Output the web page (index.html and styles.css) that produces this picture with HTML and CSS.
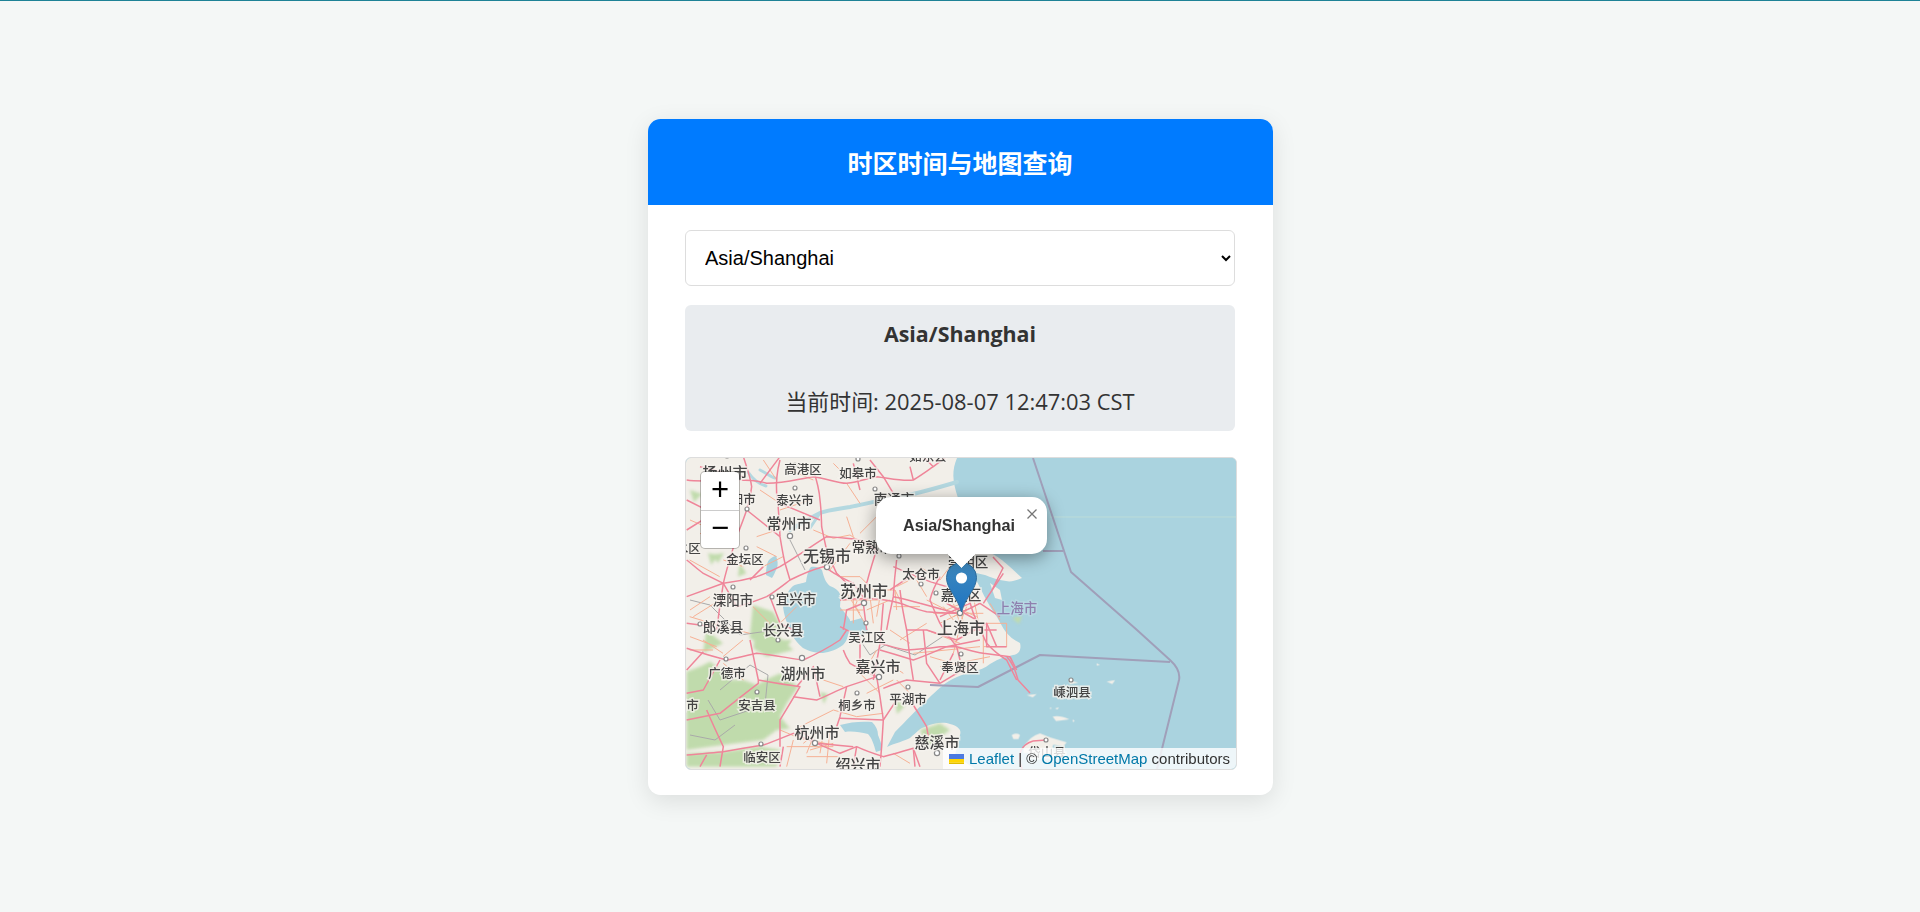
FILE: index.html
```html
<!DOCTYPE html>
<html lang="zh-CN">
<head>
<meta charset="utf-8">
<title>时区时间与地图查询</title>
<link rel="stylesheet" href="styles.css">
</head>
<body>
<main class="card">
  <header class="card-head"><h1>时区时间与地图查询</h1></header>
  <section class="card-body">
    <select class="zone-select"><option>Asia/Shanghai</option></select>
    <div class="info">
      <h2>Asia/Shanghai</h2>
      <p>当前时间: 2025-08-07 12:47:03 CST</p>
    </div>
    <div class="map">
      <svg class="tiles" viewBox="686 458 550 311" aria-hidden="false">
        <rect class="sea" x="686" y="458" width="550" height="311"/>
        <g class="soft">
          <path class="land" d="M686 458H957C952 470 952 480 958 498C958 515 948 530 952 545C958 560 968 570 975 578C982 590 985 600 997 617C1003 628 1007 637 1020 643C1022 650 1018 655 1013 655C1005 657 1000 658 990 664C980 672 968 672 957 677C945 682 937 690 927 700C918 708 905 722 895 732L887 747C895 743 905 741 910 738C917 732 920 728 925 727C935 722 945 722 950 724C958 726 962 730 960 735L955 755L975 769H686Z"/>
          <path class="land" d="M960 560C970 556 978 552 985 552C995 553 1003 560 1022 578C1015 581 1010 582 1006 581C998 580 990 577 985 575C975 573 970 571 965 570Z"/>
          <path class="land" d="M990 583L1000 590L1002 600L995 598Z"/>
          <g transform="translate(930 630) scale(.3333)">
            <path class="land" d="M245 315q15-8 25 0l-5 12h-15z"/>
            <path class="land" d="M280 355q15-35 50-45l30 12 50 15-10 12-30-5-10 25h-80z"/>
            <path class="land" d="M290 195l30-3-12 10zM368 260q20-5 50 8l-40 5zM415 150l30 8-25 5zM530 155l25-5-8 12zM500 100l10 5-10 2zM360 232l6 3-6 2zM375 235l12-3-5 7zM428 268l6 5-6 3z"/>
          </g>
          <path class="lake" d="M783 607C785 598 788 590 793 586C798 583 802 584 806 582C807 576 808 570 811 567C816 566 820 568 822 570C824 578 826 583 830 586C835 588 838 590 840 594C841 600 840 604 840 607C844 612 848 616 850 620C851 626 850 632 848 635C847 640 845 643 843 645C836 650 830 652 823 653C816 653 808 651 803 648C796 642 792 636 790 630C786 622 784 614 783 607Z"/>
          <path class="lake" d="M766 575C766 568 767 562 769 560C771 558 774 556 776 556C778 560 778 565 777 568C775 572 774 575 772 578Z"/>
          <path class="lake" d="M847 622L862 618L868 630L858 640L850 636Z"/>
          <path class="lake" d="M840 725C850 722 862 721 872 722C876 726 878 730 878 735C880 740 882 745 882 750L876 752C874 745 872 738 868 734C860 732 852 731 845 732Z"/>
          <path class="river" d="M957 482C930 490 915 494 900 497C880 500 865 504 850 507C838 509 828 510 820 513C810 518 800 524 790 530"/>
          <path class="river thin" d="M748 472C752 478 758 484 766 486M760 470C768 474 772 478 775 478M820 513L810 528"/>
        </g>
        <g class="leaf">
          <g transform="translate(680 630) scale(.3333)">
            <path class="forest" d="M20 125L60 110L90 95L130 125L150 150L190 150L230 165L265 145L300 130L355 170L320 220L300 260L330 295L290 300L250 330L130 345L20 360Z"/>
            <path class="forest" d="M20 370L130 365L240 350L300 360L290 410H20Z"/>
            <path class="forest" d="M225 5L290 15L340 60L260 80L220 55Z"/>
            <path class="forest" d="M720 300l60-20 30 20-70 50z"/>
          </g>
          <g transform="translate(683 540) scale(.3333)">
            <path class="forest" d="M210 195l60 20 30 50-40 60-60-30z M70 270l50 40-60 30zM75 40l30 5-20 30zM170 70l20 30-25 10z"/>
          </g>
          <path class="forest" d="M712 555l12-2-6 10zM1012 618l10-2-3 8zM690 490l12 4-8 8zM780 640l12 0-6 8zM820 692l8 2-4 10zM895 700l10 6-8 8z"/>
        </g>
        <g class="soft">
          <path class="sea-line" d="M1050 517H1236"/>
          <path class="border" d="M1033 458L1071 572L1137 630L1170 660Q1181 670 1179 680L1157 769"/>
          <path class="border" d="M930 685L978 687L1040 655L1170 662M1043 551H1063"/>
          <path class="border thin" d="M690 600l20 5 30 30 35 -5M720 690l30-25 18 10-3 30 -45 15 -12-20M690 735l25 5 20-15M790 540l15 30M945 635l-30 20-30-10-15 10-10-15"/>
        </g>
        <g class="soft">
          <g class="minor" transform="translate(680 450) scale(.3333)">
            <path d="M400 240l60 25 50-10 30 20M500 200l20 60M590 200l-50 50M450 360l60-80M480 380h60l60 60M600 440l-10 60M640 470h80M720 350l60 40 30-40M130 330l60 20M60 250l60 30M230 260l60-20M240 120l60 40M500 100l40 60M620 230l-30 60M290 320l-60-30M300 180l90-30M30 210l70 30 60-20M330 60l70 30M460 40l50 50M250 30l40 60M100 120l80 30M120 450l-80 50M350 470l-60 60M560 480l70-30M710 380l-60 30M30 480l60-40"/>
          </g>
          <g class="minor" transform="translate(683 540) scale(.3333)">
            <path d="M20 60l90 50M20 230l100 30M120 260l80 20M180 300l-60 50M60 300l60 40M20 330h70M210 200l50 50M240 80l60-30"/>
          </g>
          <g class="minor" transform="translate(840 560) scale(.3333)">
            <path d="M0 120H120M40 90V190M0 150h70M60 100l-15 40 30 50M120 90h45l20 40M165 90l5 60M260 120l60 30 90-40M280 160h150M300 190l120-60M340 130l30 90M400 110l20 100M430 190h70v70h-70zM360 200l-20 80M260 210l100 40M220 280l200-20M430 260v50M150 210l60 40M180 240l80-50M310 140l30 40M320 130l90 40M340 170l60-30M360 140l10 50M380 140l-20 50M20 100l40 60M90 110l10 80M230 60l30 50M450 130l30 50M270 290l100 30M300 320l150-30"/>
          </g>
          <g class="minor" transform="translate(680 630) scale(.3333)">
            <path d="M300 300l60 25 100 20M460 240l70 20 80-10M360 290l100-50M320 350h140M340 330l-20 80M450 300l-10 100M540 130l60 60M560 190l80-40M610 90l60 40M430 150l60 20M30 20l80 30M650 150l60 60M380 380h100M370 340l50-40M390 360l70-20M400 320l-20 50M430 310l-10 60M640 370l50 30M130 100l60 50M590 60l-40 70"/>
          </g>
          <g class="road" transform="translate(680 450) scale(.3333)">
            <path d="M20 90C80 100 200 80 260 100C320 100 360 85 400 80C440 85 470 100 500 100C540 95 560 85 590 80C630 85 670 95 700 90C725 75 745 60 760 50L800 20"/>
            <path d="M400 60C410 90 418 120 420 150C424 180 424 205 425 230C430 255 435 280 440 300C450 325 460 350 470 370L500 400"/>
            <path d="M300 30C292 60 288 100 290 130C296 170 298 220 300 260C305 290 310 320 315 340L330 390"/>
            <path d="M190 20C200 50 212 85 215 110C212 135 205 160 200 180C190 210 180 235 170 260C155 310 140 355 130 400C122 450 115 500 110 540"/>
            <path d="M20 150C50 165 80 180 100 190C125 210 150 240 170 260"/>
            <path d="M20 330C40 345 55 360 70 370L130 400C165 395 200 388 230 380C255 372 280 360 300 350C350 320 400 285 440 260C480 262 515 265 540 270L590 300"/>
            <path d="M20 440L130 400"/>
            <path d="M130 400C145 425 158 450 170 470C205 462 235 450 260 440C285 425 310 405 330 390C365 372 400 358 430 350C445 358 465 372 480 380C495 388 510 395 520 400L560 455"/>
            <path d="M610 80L640 130M700 90L690 50M610 80L570 30M760 50L730 20M540 120L520 40"/>
            <path d="M650 330C645 370 642 405 640 440C632 475 625 510 620 540"/>
            <path d="M590 300C578 335 568 370 560 400C556 425 552 445 550 460L560 540"/>
            <path d="M550 460L500 480L490 540"/>
            <path d="M640 350C680 368 715 382 750 395L800 410"/>
            <path d="M240 100L300 20M60 50L190 80M300 260L200 180M300 160L420 210M20 240L100 190M100 190L130 90"/>
            <path d="M640 440C665 445 695 452 720 460L830 490"/>
            <path d="M270 440L300 520L340 540"/>
            <path d="M20 520L100 530M210 390L250 350"/>
          </g>
          <g class="road" transform="translate(840 560) scale(.3333)">
            <path d="M0 120C60 115 110 110 180 130C210 140 235 150 260 155C290 158 320 160 350 160C375 155 400 140 420 130L480 170"/>
            <path d="M180 90L185 130C190 160 195 185 200 210C205 260 212 310 220 360"/>
            <path d="M130 130C126 170 124 210 120 250C114 285 106 325 100 360"/>
            <path d="M350 0C360 30 370 60 380 90C386 115 392 135 400 160C412 190 425 220 440 250C460 272 480 288 500 300L530 360"/>
            <path d="M300 50C285 75 275 100 270 120C280 145 290 170 300 190C315 215 335 240 350 260L360 300"/>
            <path d="M430 130L490 40"/>
            <path d="M200 210L260 210L350 240L440 190L470 260"/>
            <path d="M120 250C150 258 175 266 200 270C235 268 270 264 300 260L350 260C380 268 405 276 430 280L510 290"/>
            <path d="M340 280L300 360M510 290L530 330"/>
            <path d="M0 200L60 230L60 340"/>
            <path d="M440 190V260H500M390 210H470M150 90L210 50M320 130L410 180M300 170L390 130"/>
          </g>
          <g class="road" transform="translate(680 630) scale(.3333)">
            <path d="M20 55C60 68 100 80 140 90C170 85 200 76 230 70C280 75 330 85 370 90C410 72 450 50 480 30L500 0"/>
            <path d="M210 30C218 70 228 115 235 150C235 155 235 158 235 160C195 190 155 222 120 250L20 270"/>
            <path d="M235 150C280 158 320 165 360 170C340 205 318 240 300 270L300 350"/>
            <path d="M80 240C95 275 112 312 130 350L120 410"/>
            <path d="M20 375C60 372 95 368 130 365C170 358 210 352 250 345C280 335 310 322 340 310C365 320 390 330 410 340L520 350"/>
            <path d="M490 60C495 75 502 88 510 100C535 115 565 128 590 140C597 180 604 225 610 270L605 350L600 410"/>
            <path d="M590 140C560 150 530 160 500 170C470 182 440 198 410 210L340 200"/>
            <path d="M500 170L480 260L470 290"/>
            <path d="M730 0C734 35 737 68 740 100L780 160"/>
            <path d="M600 60C635 70 668 80 700 90C735 78 770 62 800 50L900 30"/>
            <path d="M780 160L880 100"/>
            <path d="M610 175C635 165 660 155 680 150L780 160"/>
            <path d="M480 265L610 270L650 210"/>
            <path d="M700 225C715 250 730 272 740 290L745 320"/>
            <path d="M410 340L480 370L530 350L520 410M530 350C555 362 585 372 610 380C640 372 672 364 700 355L720 410"/>
            <path d="M350 170L400 110L420 200"/>
            <path d="M20 120L70 65M120 90L70 180L20 190M300 410L310 350M700 355L705 410M360 300L410 340M60 410L80 375"/>
          </g>
          <path class="road" d="M1007 657C1012 662 1016 672 1018 680L1030 693"/>
          <path class="road" d="M1033 741C1020 745 1017 755 1022 769M1033 741L1046 740"/>
          <path class="road" d="M993 557L1003 568L992 590"/>
        </g>
        <g class="places">
          <circle cx="727" cy="456" r="2"/><circle cx="858" cy="459" r="2"/><circle cx="795" cy="465" r="2"/><circle cx="795" cy="488" r="2"/><circle cx="747" cy="509" r="2"/><circle cx="790" cy="536" r="2.6"/><circle cx="746" cy="548" r="2"/><circle cx="827" cy="567" r="2.6"/><circle cx="733" cy="587" r="2"/><circle cx="772" cy="597" r="2"/><circle cx="864" cy="603" r="2.6"/><circle cx="866" cy="623" r="2"/><circle cx="899" cy="556" r="2"/><circle cx="921" cy="584" r="2"/><circle cx="936" cy="593" r="2"/><circle cx="960" cy="613" r="2.6"/><circle cx="961" cy="654" r="2"/><circle cx="778" cy="640" r="2"/><circle cx="700" cy="624" r="2"/><circle cx="726" cy="659" r="2"/><circle cx="802" cy="658" r="2.6"/><circle cx="757" cy="692" r="2"/><circle cx="857" cy="693" r="2"/><circle cx="879" cy="677" r="2.6"/><circle cx="908" cy="687" r="2"/><circle cx="815" cy="743" r="2.6"/><circle cx="761" cy="744" r="2"/><circle cx="937" cy="753" r="2.6"/><circle cx="1071" cy="680" r="2"/><circle cx="1046" cy="740" r="2"/><circle cx="965" cy="519" r="2"/><circle cx="875" cy="489" r="2"/>
        </g>
        <g class="labels">
          <text class="s14" x="725" y="471">扬州市</text>
          <text class="s12" x="803" y="468">高港区</text>
          <text class="s12" x="858" y="472">如皋市</text>
          <text class="s12" x="928" y="455">如东县</text>
          <text class="s13" x="894" y="498">南通市</text>
          <text class="s12" x="737" y="498">丹阳市</text>
          <text class="s12" x="795" y="499">泰兴市</text>
          <text class="s14" x="789" y="522">常州市</text>
          <text class="s13" x="872" y="546">常熟市</text>
          <text class="s15" x="827" y="555">无锡市</text>
          <text class="s12" x="921" y="573">太仓市</text>
          <text class="s12" x="745" y="558">金坛区</text>
          <text class="s12" x="682" y="547">溧水区</text>
          <text class="s15" x="864" y="590">苏州市</text>
          <text class="s13" x="733" y="599">溧阳市</text>
          <text class="s13" x="796" y="598">宜兴市</text>
          <text class="s13" x="961" y="594">嘉定区</text>
          <text class="s15" x="961" y="627">上海市</text>
          <text class="s13 purple" x="1017" y="607">上海市</text>
          <text class="s13" x="968" y="561">崇明区</text>
          <text class="s13" x="723" y="626">郎溪县</text>
          <text class="s13" x="783" y="629">长兴县</text>
          <text class="s12" x="867" y="636">吴江区</text>
          <text class="s14" x="878" y="665">嘉兴市</text>
          <text class="s12" x="960" y="666">奉贤区</text>
          <text class="s12" x="727" y="672">广德市</text>
          <text class="s14" x="803" y="672">湖州市</text>
          <text class="s12" x="757" y="704">安吉县</text>
          <text class="s12" x="680" y="704">宁国市</text>
          <text class="s12" x="857" y="704">桐乡市</text>
          <text class="s12" x="908" y="698">平湖市</text>
          <text class="s14" x="817" y="731">杭州市</text>
          <text class="s14" x="937" y="741">慈溪市</text>
          <text class="s12" x="762" y="756">临安区</text>
          <text class="s14" x="858" y="763">绍兴市</text>
          <text class="s12" x="1072" y="691">嵊泗县</text>
          <text class="s12" x="1047" y="751">岱山县</text>
        </g>
      </svg>
      <svg class="marker" viewBox="0 0 33 52" aria-hidden="true">
        <defs>
          <linearGradient id="pin" x1="0" y1="0" x2="0" y2="1">
            <stop offset="0" stop-color="#3e88bd"/>
            <stop offset="1" stop-color="#1f75c2"/>
          </linearGradient>
        </defs>
        <path fill="url(#pin)" stroke="#2f6d9c" d="M16.5 51C12 35 1.5 28 1.5 16.5A15 15 0 0 1 31.5 16.5C31.5 28 21 35 16.5 51Z"/>
        <circle cx="16.5" cy="17" r="5.6" fill="#fff"/>
      </svg>
      <div class="popup">
        <strong>Asia/Shanghai</strong>
        <svg class="popup-close" viewBox="0 0 10 10" aria-hidden="true"><path d="M.5 .5L9.5 9.5M9.5 .5L.5 9.5"/></svg>
        <span class="popup-tip"></span>
      </div>
      <div class="zoom">
        <a class="zoom-btn zoom-in">+</a>
        <a class="zoom-btn">−</a>
      </div>
      <div class="attr">
        <svg class="flag" viewBox="0 0 12 8" aria-hidden="true"><path fill="#4C7BE1" d="M0 0h12v4H0z"/><path fill="#FFD500" d="M0 4h12v3H0z"/><path fill="#E0BC00" d="M0 7h12v1H0z"/></svg>
        <a>Leaflet</a> <span class="sep">|</span> © <a>OpenStreetMap</a> contributors
      </div>
    </div>
  </section>
</main>
</body>
</html>
```
FILE: styles.css
```css
* { box-sizing: border-box; }
html, body { margin: 0; padding: 0; }
body {
  min-height: 100vh;
  padding-top: 2px;
  display: flex;
  align-items: center;
  justify-content: center;
  background: #f4f7f6;
  box-shadow: inset 0 1px 0 #1d8296;
  font-family: "Open Sans", "Noto Sans CJK SC", sans-serif;
  color: #333;
}
.card {
  width: 625px;
  height: 676px;
  background: #fff;
  border-radius: 12.5px;
  box-shadow: 0 6px 25px rgba(0, 0, 0, .1);
  overflow: hidden;
}
.card-head {
  height: 86px;
  background: #007bff;
  display: flex;
  align-items: center;
  justify-content: center;
}
.card-head h1 {
  margin: 0;
  color: #fff;
  font: 700 25px/1.2 "Noto Sans CJK SC", sans-serif;
}
.card-body {
  padding: 25px 37.5px;
  display: flex;
  flex-direction: column;
}
.zone-select {
  width: 100%;
  height: 56px;
  padding: 0 15px;
  border: 1px solid #ddd;
  border-radius: 6px;
  background: #fff;
  color: #000;
  font: 20px "Liberation Sans", sans-serif;
}
.info {
  margin-top: 19px;
  height: 126px;
  background: #e9ecef;
  border-radius: 6px;
  text-align: center;
  display: flex;
  flex-direction: column;
  align-items: center;
  padding-top: 13px;
}
.info h2 {
  margin: 0;
  font: 700 21.4px/32px "Open Sans", "Noto Sans CJK SC", sans-serif;
}
.info p {
  margin: 36px 0 0;
  font: 400 21.9px/32px "Open Sans", "Noto Sans CJK SC", sans-serif;
}
.map {
  position: relative;
  box-sizing: content-box;
  width: 550px;
  height: 311px;
  margin-top: 26px;
  border: 1px solid #ddd;
  border-radius: 6px;
  overflow: hidden;
  background: #aad3df;
}
.tiles { display: block; width: 550px; height: 311px; }
.sea { fill: #aad3df; }
.soft { filter: blur(.7px); }
.leaf { filter: blur(1.8px); }
.land { fill: #f2efe9; }
.lake { fill: #aad3df; }
.river { fill: none; stroke: #b4d8e0; stroke-width: 4; stroke-linecap: round; }
.river.thin { stroke-width: 3; }
.forest { fill: #c0dbac; }
.sea-line { fill: none; stroke: #bcdcd8; stroke-width: 1; }
.border { fill: none; stroke: #a09fb9; stroke-width: 2; stroke-linejoin: round; }
.border.thin { stroke: #a9a9a9; stroke-width: 1; }
.road path, .road { fill: none; stroke: #ef8599; stroke-width: 1.5; stroke-linejoin: round; }
.road path { stroke-width: 4.5; }
.minor path { fill: none; stroke: #f6b094; stroke-width: 3; }
.places circle { fill: #fff; stroke: #888; stroke-width: 1.2; }
.labels text {
  font-family: "Noto Sans CJK SC", sans-serif;
  font-weight: 500;
  fill: #454545;
  stroke: rgba(245, 243, 238, .8);
  stroke-width: 3px;
  paint-order: stroke;
  text-anchor: middle;
  dominant-baseline: central;
  filter: blur(.45px);
}
.labels .s12 { font-size: 12.5px; }
.labels .s13 { font-size: 13.5px; }
.labels .s14 { font-size: 15px; }
.labels .s15 { font-size: 16px; }
.labels .purple { fill: #8f7fae; stroke: rgba(190, 220, 230, .6); }
.marker {
  position: absolute;
  left: 259px;
  top: 103px;
  width: 33px;
  height: 52px;
}
.popup {
  position: absolute;
  left: 190px;
  top: 39px;
  width: 171px;
  height: 57px;
  background: #fff;
  border-radius: 15px;
  box-shadow: 0 4px 17px rgba(0, 0, 0, .4);
  display: flex;
  align-items: center;
  padding-left: 27px;
  font: 700 16.25px "Liberation Sans", sans-serif;
  color: #333;
}
.popup strong { position: relative; z-index: 1; }
.popup-close {
  position: absolute;
  right: 10px;
  top: 12px;
  width: 10px;
  height: 10px;
  fill: none;
  stroke: #757575;
  stroke-width: 1.3;
  z-index: 1;
}
.popup-tip {
  position: absolute;
  left: 75px;
  top: 46px;
  width: 21px;
  height: 21px;
  background: #fff;
  transform: rotate(45deg);
  box-shadow: 0 4px 17px rgba(0, 0, 0, .25);
  clip-path: polygon(100% 0, 100% 100%, 0 100%);
}
.zoom {
  position: absolute;
  left: 15px;
  top: 14px;
  width: 38px;
  height: 76px;
  background: #fff;
  border-radius: 4px;
  box-shadow: 0 0 0 1px rgba(0, 0, 0, .25);
  display: flex;
  flex-direction: column;
  overflow: hidden;
}
.zoom-btn {
  flex: 1;
  display: flex;
  align-items: center;
  justify-content: center;
  padding-bottom: 3px;
  color: #000;
  font: 400 31px/1 "Liberation Sans", sans-serif;
}
.zoom-in { border-bottom: 1px solid #ccc; }
.attr {
  position: absolute;
  right: 0;
  bottom: 0;
  height: 21px;
  padding: 0 6px;
  background: rgba(255, 255, 255, .8);
  color: #333;
  font: 15px/21px "Liberation Sans", sans-serif;
  white-space: nowrap;
}
.attr a { color: #0078a8; }
.flag { width: 15px; height: 10px; display: inline-block; margin-right: 1px; }
.sep { color: #333; }
```
